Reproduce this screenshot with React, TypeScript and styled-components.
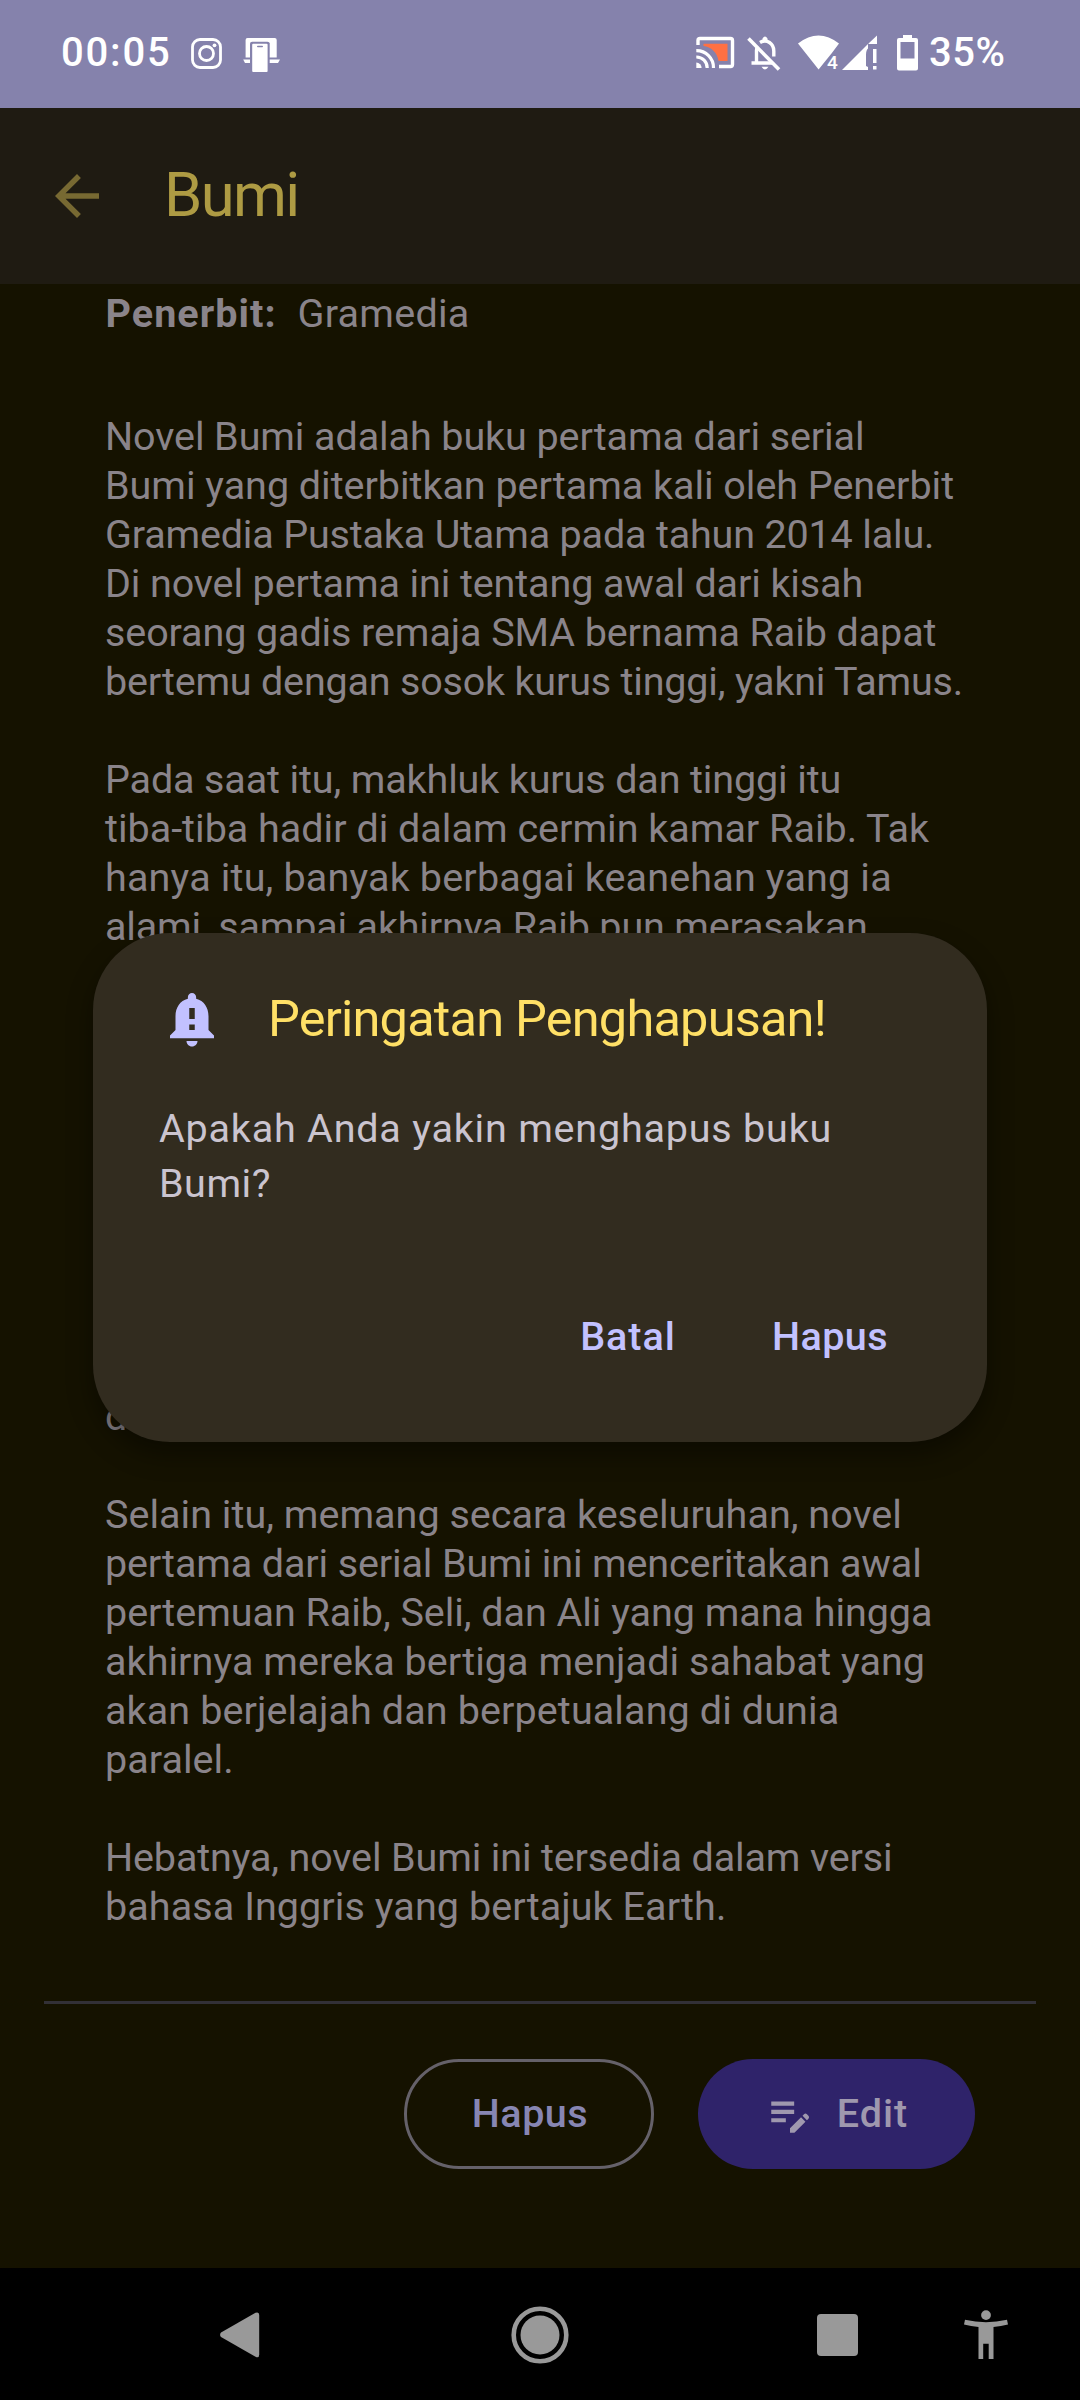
import React from "react";
import styled, { createGlobalStyle } from "styled-components";

const color = {
  status: "#8582ac",
  bar: "#1f1b12",
  page: "#151200",
  pageText: "#8a848a",
  dialog: "#322c1f",
  dialogText: "#cac4cf",
  dialogTitle: "#ffe066",
  accent: "#c2c1ff",
  accentDim: "#8786b3",
  filled: "#2f236a",
  onFilled: "#9f98ae",
  nav: "#999999",
};

const GlobalStyle = createGlobalStyle`
  * { box-sizing: border-box; }
  body { margin: 0; background: #000; }
`;

const Screen = styled.div`
  position: relative;
  width: 1080px;
  height: 2400px;
  display: flex;
  flex-direction: column;
  overflow: hidden;
  font-family: Roboto, "Noto Sans", sans-serif;
  font-size: 39.5px;
  background: ${color.page};
`;

const StatusBar = styled.header`
  flex: none;
  height: 108px;
  display: flex;
  align-items: center;
  justify-content: space-between;
  padding: 0 75px 2px 61px;
  background: ${color.status};
  color: #fff;
`;

const StatusGroup = styled.div`
  display: flex;
  align-items: center;
`;

const StatusText = styled.span<{ $track: number }>`
  font-size: 40px;
  font-weight: 500;
  line-height: 46px;
  letter-spacing: ${(p) => p.$track}px;
  margin-right: ${(p) => -p.$track}px;
`;

const StatusIcon = styled.svg<{ $before: number }>`
  flex: none;
  display: block;
  margin-left: ${(p) => p.$before}px;
  overflow: visible;
`;

const AppBar = styled.div`
  flex: none;
  height: 176px;
  display: flex;
  align-items: center;
  gap: 54px;
  padding: 0 44px;
  background: ${color.bar};
`;

const BackIcon = styled.svg`
  width: 66px;
  height: 66px;
  fill: #776932;
`;

const AppTitle = styled.h1`
  margin: 0;
  padding-bottom: 3px;
  font-size: 61.5px;
  font-weight: 400;
  line-height: 72px;
  letter-spacing: -1.6px;
  color: #ae9b43;
`;

const Content = styled.main`
  flex: 1;
  min-height: 0;
  padding: 5px 44px 0;
  color: ${color.pageText};
`;

const Publisher = styled.div`
  display: flex;
  height: 49px;
  padding-left: 61.5px;
  line-height: 50px;
`;

const Label = styled.b`
  width: 192px;
  font-weight: 700;
  letter-spacing: 1.05px;
`;

const Value = styled.span`
  letter-spacing: 0.27px;
`;

const Synopsis = styled.article`
  margin-top: 74px;
  padding-left: 61px;
  display: flex;
  flex-direction: column;
  gap: 49px;
`;

const Paragraph = styled.p<{ $lines?: number }>`
  margin: 0;
  display: flex;
  flex-direction: column;
  justify-content: flex-start;
  min-height: ${(p) => (p.$lines ? p.$lines * 49 : 0)}px;
`;

const Line = styled.span<{ $track: number; $last?: boolean }>`
  line-height: 49px;
  height: 49px;
  white-space: nowrap;
  letter-spacing: ${(p) => p.$track - 0.46}px;
  margin-top: ${(p) => (p.$last ? "auto" : 0)};
`;

const Divider = styled.hr`
  height: 3px;
  margin: 70px 0 55px;
  border: 0;
  background: #323036;
`;

const Actions = styled.div`
  display: flex;
  justify-content: flex-end;
  gap: 44px;
  padding-right: 61px;
`;

const Button = styled.button<{ $filled?: boolean }>`
  width: ${(p) => (p.$filled ? 277 : 250)}px;
  height: 110px;
  padding: ${(p) => (p.$filled ? "0" : "0 0 0 2px")};
  display: flex;
  align-items: center;
  justify-content: center;
  gap: 22px;
  border: ${(p) => (p.$filled ? "0" : "3px solid #656169")};
  border-radius: 55px;
  background: ${(p) => (p.$filled ? color.filled : "transparent")};
  color: ${(p) => (p.$filled ? color.onFilled : color.accentDim)};
  font: inherit;
  font-weight: 500;
  letter-spacing: ${(p) => (p.$filled ? 1 : 0.5)}px;
`;

const ButtonLabel = styled.span`
  padding-bottom: 2px;
`;

const EditIcon = styled.svg`
  width: 50px;
  height: 50px;
  fill: currentColor;
`;

const Scrim = styled.div`
  position: absolute;
  inset: 0;
  display: flex;
  align-items: flex-start;
  justify-content: center;
  padding-top: 933px;
`;

const Dialog = styled.section`
  width: 894px;
  height: 509px;
  display: flex;
  flex-direction: column;
  padding: 53px 66px 50px;
  border-radius: 77px;
  background: ${color.dialog};
  box-shadow: 0 12px 26px rgba(0, 0, 0, 0.4);
`;

const DialogHeader = styled.div`
  display: flex;
  align-items: center;
  gap: 43px;
  height: 66px;
`;

const BellIcon = styled.svg`
  width: 66px;
  height: 66px;
  fill: ${color.accent};
`;

const DialogTitle = styled.h2`
  margin: 0;
  font-size: 50.5px;
  font-weight: 400;
  line-height: 66px;
  letter-spacing: -0.8px;
  white-space: nowrap;
  color: ${color.dialogTitle};
`;

const DialogBody = styled.p`
  margin: 49px 0 0;
  display: flex;
  flex-direction: column;
  color: ${color.dialogText};
`;

const DialogLine = styled.span<{ $track: number }>`
  line-height: 55px;
  letter-spacing: ${(p) => p.$track}px;
`;

const DialogActions = styled.div`
  margin-top: auto;
  display: flex;
  justify-content: flex-end;
  gap: 31px;
`;

const TextButton = styled.button<{ $width: number; $track: number }>`
  width: ${(p) => p.$width}px;
  height: 110px;
  padding: 0 0 2px;
  border: 0;
  background: none;
  color: ${color.accent};
  font: inherit;
  font-weight: 500;
  letter-spacing: ${(p) => p.$track}px;
`;

const NavBar = styled.nav`
  flex: none;
  height: 132px;
  display: flex;
  align-items: center;
  padding-top: 1px;
  background: #000;
`;

const NavIcon = styled.svg<{ $before: number }>`
  flex: none;
  display: block;
  margin-left: ${(p) => p.$before}px;
  fill: ${color.nav};
`;

type LineData = [string, number];

const opening: LineData[] = [
  ["Novel Bumi adalah buku pertama dari serial", 0.37],
  ["Bumi yang diterbitkan pertama kali oleh Penerbit", 0.43],
  ["Gramedia Pustaka Utama pada tahun 2014 lalu.", 0.29],
  ["Di novel pertama ini tentang awal dari kisah", 0.35],
  ["seorang gadis remaja SMA bernama Raib dapat", 0.36],
  ["bertemu dengan sosok kurus tinggi, yakni Tamus.", 0.27],
];

const encounter: LineData[] = [
  ["Pada saat itu, makhluk kurus dan tinggi itu", 0.33],
  ["tiba-tiba hadir di dalam cermin kamar Raib. Tak", 0.46],
  ["hanya itu, banyak berbagai keanehan yang ia", 0.63],
  ["alami, sampai akhirnya Raib pun merasakan", 0.29],
];

const friendship: LineData[] = [
  ["Selain itu, memang secara keseluruhan, novel", 0.48],
  ["pertama dari serial Bumi ini menceritakan awal", 0.33],
  ["pertemuan Raib, Seli, dan Ali yang mana hingga", 0.42],
  ["akhirnya mereka bertiga menjadi sahabat yang", 0.52],
  ["akan berjelajah dan berpetualang di dunia", 0.57],
  ["paralel.", 0.51],
];

const closing: LineData[] = [
  ["Hebatnya, novel Bumi ini tersedia dalam versi", 0.32],
  ["bahasa Inggris yang bertajuk Earth.", 0.54],
];

const renderLines = (lines: LineData[]) =>
  lines.map(([text, track]) => (
    <Line key={text} $track={track}>
      {text}
    </Line>
  ));

function StatusIcons() {
  return (
    <StatusGroup>
      <StatusIcon $before={0} width="39" height="36" viewBox="696 35 39 36">
        <path d="M703.5 43.7H727.5V61H718.5C717.5 53 711 46.5 703.5 46Z" fill="#ff7043" />
        <path
          d="M698 45V40.5Q698 38.5 700 38.5H730.5Q732.5 38.5 732.5 40.5V64.5Q732.5 66.5 730.5 66.5H719"
          fill="none"
          stroke="#fff"
          strokeWidth="3.4"
        />
        <path
          d="M696.3 50.7A17 17 0 0 1 713.5 68M696.3 57A10.8 10.8 0 0 1 707.2 68"
          fill="none"
          stroke="#fff"
          strokeWidth="3.2"
        />
        <path d="M696.3 62.6A5.3 5.3 0 0 1 701.6 68H696.3Z" fill="#fff" />
      </StatusIcon>
      <StatusIcon $before={12} width="33" height="36" viewBox="747 35 33 36" fill="none" stroke="#fff">
        <path d="M748.5 38.5L779 69.5" strokeWidth="3.6" />
        <path
          d="M751.5 63H772M756.5 62V50.5Q756.5 48.5 757.5 46.5M760 42.5Q765 39.5 769.5 42.5Q773.8 45.5 773.8 51V56.5"
          strokeWidth="3.4"
        />
        <path d="M762.5 40.5V38.5Q765 34.5 767.5 38.5V40.5ZM761.5 66.8H768.5Q765 72 761.5 66.8Z" fill="#fff" stroke="none" />
      </StatusIcon>
      <StatusIcon $before={18} width="42" height="36" viewBox="798 35 42 36" fill="#fff">
        <path d="M798 43.5Q818.5 27.5 839 43.5L831.5 53.5L825 61.5L818.6 69.5Z" />
        <text
          x="827"
          y="69"
          fontSize="19"
          fontWeight="500"
          fontFamily="Roboto, sans-serif"
          stroke={color.status}
          strokeWidth="2"
          paintOrder="stroke"
        >
          4
        </text>
      </StatusIcon>
      <StatusIcon $before={2} width="36" height="36" viewBox="842 35 36 36" fill="#fff">
        <path d="M842 70L868 44V48.5Q866 50 866 55V66L868 67V70ZM868.5 43.5L877 35.5V44H868.5ZM873 49H876.5V63H873ZM873 66H876.5V69.5H873Z" />
      </StatusIcon>
      <StatusIcon $before={19} width="21" height="36" viewBox="897 35 21 36" fill="#fff">
        <path
          fillRule="evenodd"
          d="M903 35H912V38H916Q918 38 918 40V68.5Q918 70.5 916 70.5H899Q897 70.5 897 68.5V40Q897 38 899 38H903ZM900.5 42V58.5H914.5V42Z"
        />
      </StatusIcon>
    </StatusGroup>
  );
}

const StatusEnd = styled.div`
  display: flex;
  align-items: center;
  gap: 11px;
`;

export default function App() {
  return (
    <Screen>
      <GlobalStyle />
      <StatusBar>
        <StatusGroup>
          <StatusText $track={1.8}>00:05</StatusText>
          <StatusIcon $before={21} width="31" height="31" viewBox="0 0 31 31" fill="none" stroke="#fff">
            <rect x="1.5" y="1.5" width="28" height="28" rx="7.5" strokeWidth="2.8" />
            <circle cx="15.5" cy="15.5" r="7" strokeWidth="2.8" />
            <circle cx="23.5" cy="7.3" r="1.9" fill="#fff" stroke="none" />
          </StatusIcon>
          <StatusIcon $before={21} width="37" height="38" viewBox="243 34 37 38" fill="#fff">
            <path d="M247.5 38H274.7Q276.7 38 276.7 40V57.5H245.6V40Q245.6 38 247.5 38ZM243.2 59.5H251V63H245ZM269 59.5H280L278 63H269Z" />
            <path
              d="M250 72V43.5Q250 41.8 252.2 41.8H267.5Q269.7 41.8 269.7 43.5V72Z"
              fill={color.status}
            />
            <rect x="252.2" y="43.8" width="15.4" height="28.2" rx="1" />
            <rect x="257" y="45.7" width="6" height="1.6" rx=".8" fill={color.status} />
          </StatusIcon>
        </StatusGroup>
        <StatusEnd>
          <StatusIcons />
          <StatusText $track={0.5}>35%</StatusText>
        </StatusEnd>
      </StatusBar>

      <AppBar>
        <BackIcon viewBox="0 0 24 24">
          <path d="M20 11H7.83l5.59-5.59L12 4l-8 8 8 8 1.41-1.41L7.83 13H20v-2z" />
        </BackIcon>
        <AppTitle>Bumi</AppTitle>
      </AppBar>

      <Content>
        <Publisher>
          <Label>Penerbit:</Label>
          <Value>Gramedia</Value>
        </Publisher>
        <Synopsis>
          <Paragraph>{renderLines(opening)}</Paragraph>
          <Paragraph $lines={14}>
            {renderLines(encounter)}
            <Line $track={0} $last>
              d
            </Line>
          </Paragraph>
          <Paragraph>{renderLines(friendship)}</Paragraph>
          <Paragraph>{renderLines(closing)}</Paragraph>
        </Synopsis>
        <Divider />
        <Actions>
          <Button>
            <ButtonLabel>Hapus</ButtonLabel>
          </Button>
          <Button $filled>
            <EditIcon viewBox="0 0 24 24">
              <path d="M3 10h11v2H3v-2zm0-2h11V6H3v2zm0 8h7v-2H3v2zm15.01-3.13.71-.71a.996.996 0 0 1 1.41 0l.71.71c.39.39.39 1.02 0 1.41l-.71.71-2.12-2.12zm-.71.71-5.3 5.3V21h2.12l5.3-5.3-2.12-2.12z" />
            </EditIcon>
            <ButtonLabel>Edit</ButtonLabel>
          </Button>
        </Actions>
      </Content>

      <NavBar>
        <NavIcon $before={220} width="40" height="46" viewBox="0 0 40 46">
          <path d="M1 20.5L35.5 .8Q39.2-.6 39.2 3V42.5Q39.2 46.5 35.5 44.7L1 25Q-.8 22.7 1 20.5Z" />
        </NavIcon>
        <NavIcon $before={251} width="58" height="58" viewBox="-29 -29 58 58">
          <circle r="26.3" fill="none" stroke={color.nav} strokeWidth="4.6" />
          <circle r="19.5" />
        </NavIcon>
        <NavIcon $before={248} width="41" height="42" viewBox="0 0 41 42">
          <rect width="41" height="42" rx="4" />
        </NavIcon>
        <NavIcon $before={106} width="44" height="49" viewBox="964 2309.5 44 49">
          <circle cx="986" cy="2314.6" r="4.9" />
          <path d="M965 2319.3Q986 2324 1007 2319.3L1008 2324Q1001 2325.8 993.5 2326.5V2358.5H988.7V2343.3H983.2V2358.5H978.5V2326.5Q971 2325.8 964 2324Z" />
        </NavIcon>
      </NavBar>

      <Scrim>
        <Dialog>
          <DialogHeader>
            <BellIcon viewBox="0 0 24 24">
              <path d="M18 16v-5c0-3.07-1.64-5.64-4.5-6.32V4c0-.83-.67-1.5-1.5-1.5s-1.5.67-1.5 1.5v.68C7.63 5.36 6 7.92 6 11v5l-2 2v1h16v-1l-2-2zm-5 0h-2v-2h2v2zm0-4h-2V8h2v4zm-1 10c1.1 0 2-.9 2-2h-4c0 1.1.89 2 2 2z" />
            </BellIcon>
            <DialogTitle>Peringatan Penghapusan!</DialogTitle>
          </DialogHeader>
          <DialogBody>
            <DialogLine $track={0.8}>Apakah Anda yakin menghapus buku</DialogLine>
            <DialogLine $track={0.5}>Bumi?</DialogLine>
          </DialogBody>
          <DialogActions>
            <TextButton $width={160} $track={1}>Batal</TextButton>
            <TextButton $width={182} $track={0.45}>Hapus</TextButton>
          </DialogActions>
        </Dialog>
      </Scrim>
    </Screen>
  );
}
